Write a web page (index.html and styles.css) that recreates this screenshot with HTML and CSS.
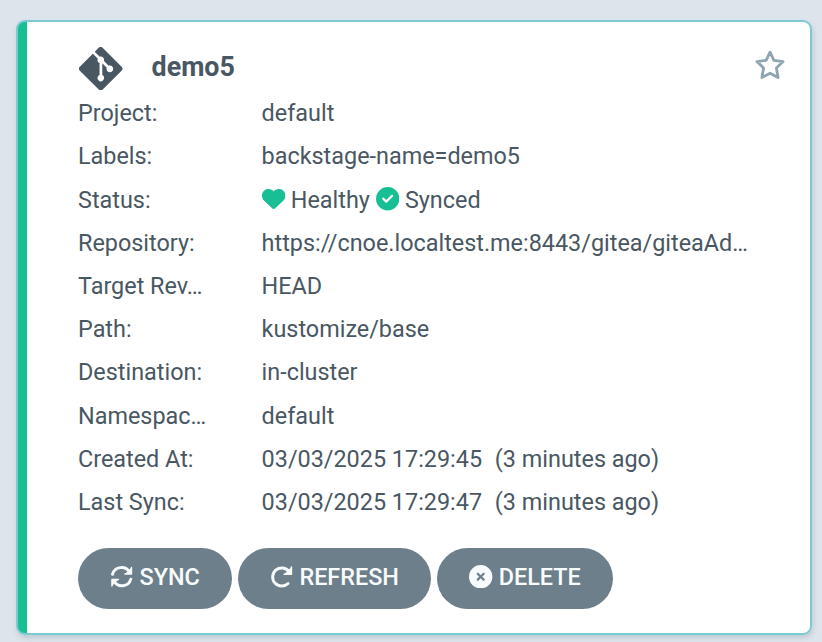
FILE: index.html
```html
<!DOCTYPE html>
<html lang="en">
<head>
<meta charset="utf-8">
<title>Applications</title>
<link rel="stylesheet" href="styles.css">
</head>
<body>
<article class="card">
  <header class="head">
    <svg class="git" viewBox="0 32 448 448"><path d="M439.55 236.05L244 40.45a28.87 28.87 0 0 0-40.81 0l-40.66 40.63 51.52 51.52c27.06-9.14 52.68 16.77 43.39 43.68l49.66 49.66c34.23-11.8 61.18 31 35.47 56.69-26.49 26.49-70.21-2.87-56-37.34L240.22 199v121.85c25.3 12.54 22.26 41.85 9.08 55a34.34 34.34 0 0 1-48.55 0c-17.57-17.6-11.07-46.91 11.25-56v-123c-20.8-8.51-24.6-30.74-18.64-45L142.57 101 8.45 235.14a28.86 28.86 0 0 0 0 40.81l195.61 195.6a28.86 28.86 0 0 0 40.8 0l194.69-194.69a28.86 28.86 0 0 0 0-40.81z"/></svg>
    <h1 class="title">demo5</h1>
    <svg class="star" viewBox="0 0 30 30"><path d="M15 2.200l3.900 8.200 9.200 1.200-6.700 6.300 1.700 9.700-8.100-4.400-8.100 4.400 1.700-9.700-6.700-6.300 9.200-1.200z"/></svg>
  </header>
  <dl class="rows">
    <dt>Project:</dt><dd>default</dd>
    <dt>Labels:</dt><dd>backstage-name=demo5</dd>
    <dt>Status:</dt>
    <dd class="status">
      <svg class="ico ok" viewBox="0 0 512 512"><path d="M47.6 300.4L228.3 469.1c7.5 7 17.4 10.9 27.7 10.9s20.2-3.9 27.7-10.9L464.4 300.4c30.4-28.3 47.6-68 47.6-109.5v-5.8c0-69.9-50.5-129.5-119.4-141C347 36.5 300.6 51.4 268 84L256 96 244 84c-32.6-32.6-79-47.5-124.6-39.9C50.5 55.6 0 115.2 0 185.1v5.8c0 41.5 17.2 81.2 47.6 109.5z"/></svg>
      <span>Healthy</span>
      <svg class="ico ok" viewBox="0 0 512 512"><path d="M256 512A256 256 0 1 0 256 0a256 256 0 1 0 0 512zM369 209L241 337c-9.4 9.4-24.6 9.4-33.9 0l-64-64c-9.4-9.4-9.4-24.6 0-33.9s24.6-9.4 33.9 0l47 47L335 175c9.4-9.4 24.6-9.4 33.9 0s9.4 24.6 0 33.9z"/></svg>
      <span>Synced</span>
    </dd>
    <dt>Repository:</dt><dd>https://cnoe.localtest.me:8443/gitea/giteaAd…</dd>
    <dt>Target Rev…</dt><dd>HEAD</dd>
    <dt>Path:</dt><dd>kustomize/base</dd>
    <dt>Destination:</dt><dd>in-cluster</dd>
    <dt>Namespac…</dt><dd>default</dd>
    <dt>Created At:</dt><dd>03/03/2025 17:29:45 <span class="ago">&nbsp;(3 minutes ago)</span></dd>
    <dt>Last Sync:</dt><dd>03/03/2025 17:29:47 <span class="ago">&nbsp;(3 minutes ago)</span></dd>
  </dl>
  <div class="actions">
    <button class="btn sync"><svg class="ico line" viewBox="0 0 24 24"><path d="M2.600 9.500A9.500 9.500 0 0 1 20 7.500M21.400 14.500A9.500 9.500 0 0 1 4 16.500"/><path class="tip" d="M22 2.500v6.700h-6.700M2 21.500v-6.700h6.700"/></svg>SYNC</button>
    <button class="btn refresh"><svg class="ico line" viewBox="0 0 24 24"><path d="M18.500 19A9.300 9.300 0 1 1 19.500 6.800"/><path class="tip" d="M22 2v7.500H14.500"/></svg>REFRESH</button>
    <button class="btn delete"><svg class="ico" viewBox="0 0 512 512"><path d="M256 512A256 256 0 1 0 256 0a256 256 0 1 0 0 512zM175 175c9.4-9.4 24.6-9.4 33.9 0l47 47 47-47c9.4-9.4 24.6-9.4 33.9 0s9.4 24.6 0 33.9l-47 47 47 47c9.4 9.4 9.4 24.6 0 33.9s-24.6 9.4-33.9 0l-47-47-47 47c-9.4 9.4-24.6 9.4-33.9 0s-9.4-24.6 0-33.9l47-47-47-47c-9.4-9.4-9.4-24.6 0-33.9z"/></svg>DELETE</button>
  </div>
</article>
</body>
</html>
```
FILE: styles.css
```css
* { box-sizing: border-box; }
body {
  margin: 0;
  height: 642px;
  overflow: hidden;
  padding: 20px 10px 0 16px;
  background: #dee4eb;
  color: #495763;
  font-family: Roboto, "Liberation Sans", sans-serif;
  font-size: 23.4px;
}
.card {
  height: 615px;
  padding: 25px 25px 0 60px;
  border: 2px solid #7ccbd3;
  border-radius: 9px;
  background: linear-gradient(to right, #18be94 9px, #fff 9px);
  box-shadow: 1px 3px 5px rgba(80, 100, 110, .2);
}
.head { display: flex; height: 45.2px; }
.git { width: 43.4px; height: 43.4px; margin-left: 1.4px; fill: #495763; }
.title { margin: 0 auto 0 28.8px; font-size: 26.8px; font-weight: 700; line-height: 41px; }
.star { width: 30px; height: 30px; margin: 3px .5px 0 0; fill: none; stroke: #8fa4b1; stroke-width: 2.8; stroke-linejoin: round; }
.rows {
  display: grid;
  grid-template-columns: 183.6px 1fr;
  grid-auto-rows: 43.2px;
  margin: 0;
  line-height: 43.2px;
  white-space: nowrap;
}
dd { margin: 0; }
.ago { margin-left: 1.2px; }
.status { display: flex; align-items: center; gap: 5.8px; }
.ico { width: 23.4px; height: 23.4px; flex: none; fill: currentColor; }
.ok { margin-bottom: 2px; fill: #18be94; }
.line { fill: none; stroke: currentColor; stroke-width: 3; stroke-linecap: round; stroke-linejoin: round; }
.tip { fill: currentColor; stroke-width: 1.5; }
.actions { display: flex; gap: 6px; margin-top: 23.8px; }
.btn {
  display: flex;
  align-items: center;
  justify-content: center;
  gap: 6px;
  height: 61px;
  padding: 0 0 2px;
  border: 0;
  border-radius: 31px;
  background: #6d7f8b;
  color: #f8fbfb;
  font: 500 23.4px Roboto, "Liberation Sans", sans-serif;
}
.btn .ico { margin-bottom: 2px; }
.sync { width: 154px; }
.refresh { width: 193px; }
.delete { width: 176px; }
```
